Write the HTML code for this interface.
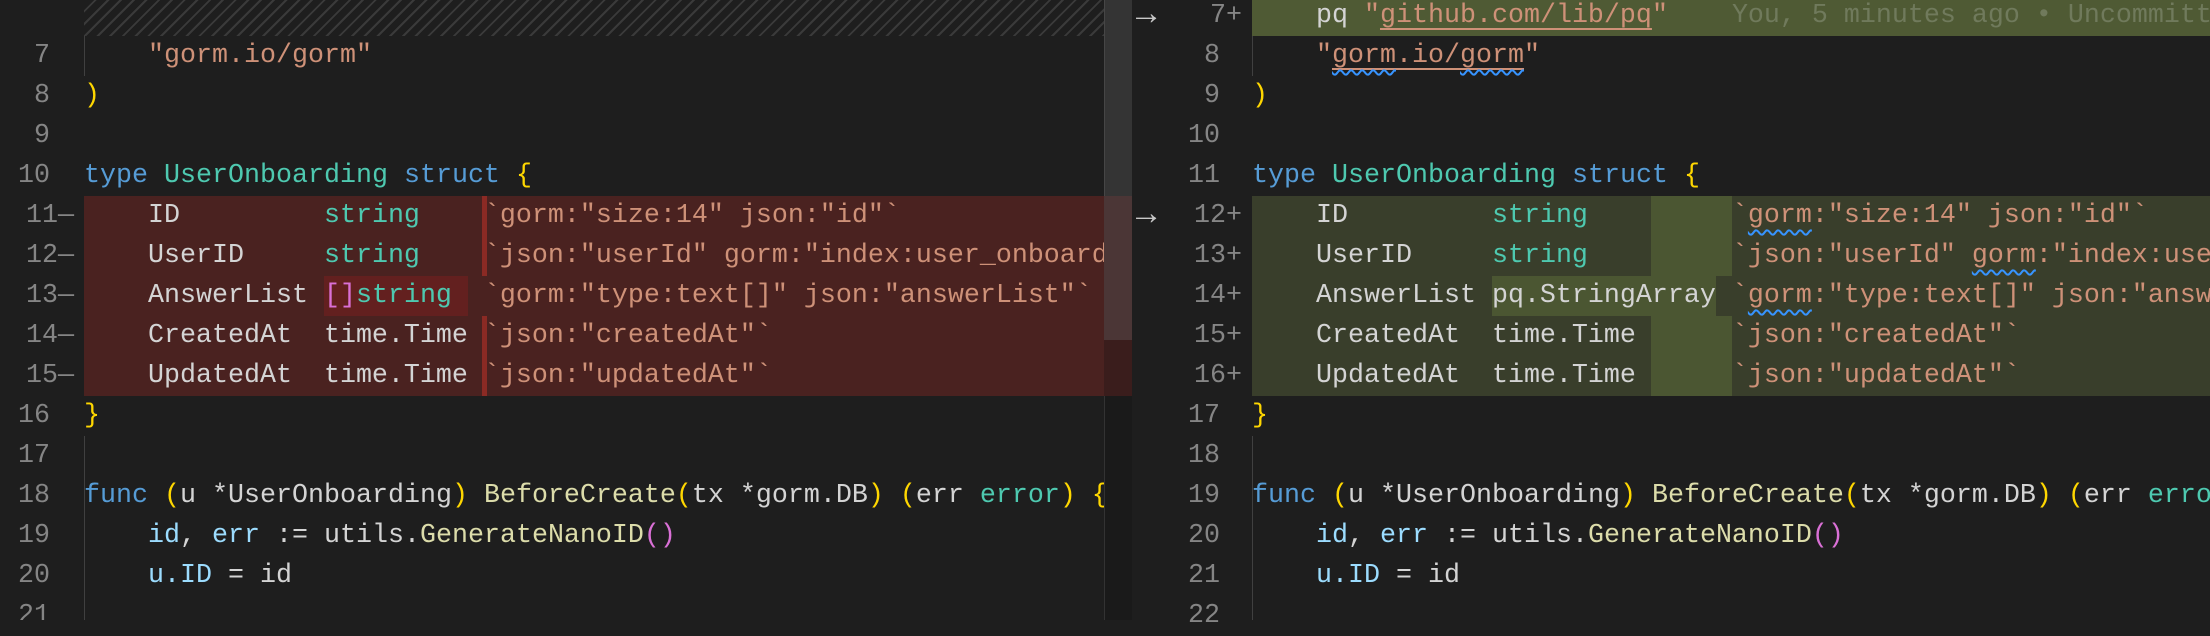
<!DOCTYPE html>
<html><head><meta charset="utf-8"><style>
*{margin:0;padding:0;box-sizing:border-box}
body{width:2210px;height:620px;background:#1e1e1e;overflow:hidden;position:relative;font-family:"Liberation Mono",monospace;font-size:26.667px;color:#d4d4d4}
.a{position:absolute}
.l{position:absolute;height:40px;line-height:40px;white-space:pre}
.n{color:#858585;text-align:right}
.k{color:#569cd6}.t{color:#4ec9b0}.s{color:#ce9178}.f{color:#dcdcaa}.b{color:#ffd700}.p{color:#da70d6}.v{color:#9cdcfe}
.lk{text-decoration:underline;text-decoration-color:#ce9178;text-underline-offset:6px;text-decoration-thickness:2px}
.sq{text-decoration:underline wavy #3794ff;text-underline-offset:7px;text-decoration-thickness:2px}
</style></head><body>
<!-- left pane -->
<div class="a" style="left:84px;top:0;width:1046px;height:36px;background:repeating-linear-gradient(-45deg,#3a3a3a 0 2px,#1e1e1e 2px 9px)"></div>
<div class="a" style="left:84px;top:196px;width:1046px;height:200px;background:#4a2220"></div>
<div class="a" style="left:324px;top:276px;width:144px;height:40px;background:#63201f"></div>
<div class="a" style="left:482px;top:196px;width:5px;height:80px;background:#8b2a24"></div>
<div class="a" style="left:482px;top:316px;width:5px;height:80px;background:#8b2a24"></div>
<div class="a" style="left:84px;top:36px;width:1px;height:40px;background:#404040"></div>
<div class="a" style="left:84px;top:436px;width:1px;height:184px;background:#404040"></div>
<div class="a" style="left:0;top:0;width:1104px;height:620px;overflow:hidden">
<div class="l n" style="left:0;width:50px;top:36px">7</div>
<div class="l n" style="left:0;width:50px;top:76px">8</div>
<div class="l n" style="left:0;width:50px;top:116px">9</div>
<div class="l n" style="left:0;width:50px;top:156px">10</div>
<div class="l n" style="left:0;width:74px;top:196px">11—</div>
<div class="l n" style="left:0;width:74px;top:236px">12—</div>
<div class="l n" style="left:0;width:74px;top:276px">13—</div>
<div class="l n" style="left:0;width:74px;top:316px">14—</div>
<div class="l n" style="left:0;width:74px;top:356px">15—</div>
<div class="l n" style="left:0;width:50px;top:396px">16</div>
<div class="l n" style="left:0;width:50px;top:436px">17</div>
<div class="l n" style="left:0;width:50px;top:476px">18</div>
<div class="l n" style="left:0;width:50px;top:516px">19</div>
<div class="l n" style="left:0;width:50px;top:556px">20</div>
<div class="l n" style="left:0;width:50px;top:596px">21</div>
<div class="l" style="left:84px;top:36px">    <span class="s">"gorm.io/gorm"</span></div>
<div class="l" style="left:84px;top:76px"><span class="b">)</span></div>
<div class="l" style="left:84px;top:156px"><span class="k">type</span> <span class="t">UserOnboarding</span> <span class="k">struct</span> <span class="b">{</span></div>
<div class="l" style="left:84px;top:196px">    ID         <span class="t">string</span>    <span class="s">`gorm:"size:14" json:"id"`</span></div>
<div class="l" style="left:84px;top:236px">    UserID     <span class="t">string</span>    <span class="s">`json:"userId" gorm:"index:user_onboarding_user_id"`</span></div>
<div class="l" style="left:84px;top:276px">    AnswerList <span class="p">[]</span><span class="t">string</span>  <span class="s">`gorm:"type:text[]" json:"answerList"`</span></div>
<div class="l" style="left:84px;top:316px">    CreatedAt  time.Time <span class="s">`json:"createdAt"`</span></div>
<div class="l" style="left:84px;top:356px">    UpdatedAt  time.Time <span class="s">`json:"updatedAt"`</span></div>
<div class="l" style="left:84px;top:396px"><span class="b">}</span></div>
<div class="l" style="left:84px;top:476px"><span class="k">func</span> <span class="b">(</span>u *UserOnboarding<span class="b">)</span> <span class="f">BeforeCreate</span><span class="b">(</span>tx *gorm.DB<span class="b">)</span> <span class="b">(</span>err <span class="t">error</span><span class="b">)</span> <span class="b">{</span></div>
<div class="l" style="left:84px;top:516px">    <span class="v">id</span>, <span class="v">err</span> := utils.<span class="f">GenerateNanoID</span><span class="p">()</span></div>
<div class="l" style="left:84px;top:556px">    <span class="v">u.ID</span> = id</div>
</div>
<div class="a" style="left:1104px;top:0;width:28px;height:620px;background:#1a1a1a;border-left:1px solid #333"></div>
<div class="a" style="left:1104px;top:196px;width:28px;height:200px;background:#3a1d1c"></div>
<div class="a" style="left:1104px;top:0;width:28px;height:340px;background:rgba(121,121,121,0.28)"></div>
<!-- right pane -->
<div class="a" style="left:1252px;top:-4px;width:958px;height:40px;background:#4f5a34"></div>
<div class="a" style="left:1252px;top:196px;width:958px;height:200px;background:#393e2b"></div>
<div class="a" style="left:1651px;top:196px;width:81px;height:80px;background:#4b5632"></div>
<div class="a" style="left:1651px;top:316px;width:81px;height:80px;background:#4b5632"></div>
<div class="a" style="left:1492px;top:276px;width:224px;height:40px;background:#4b5632"></div>
<div class="a" style="left:1252px;top:36px;width:1px;height:40px;background:#404040"></div>
<div class="a" style="left:1252px;top:436px;width:1px;height:184px;background:#404040"></div>
<div class="l" style="left:1136px;top:-4px;color:#c8c8c8;font-size:34px">→</div>
<div class="l" style="left:1136px;top:196px;color:#c8c8c8;font-size:34px">→</div>
<div class="l n" style="left:1132px;width:110px;top:-4px">7+</div>
<div class="l n" style="left:1132px;width:88px;top:36px">8</div>
<div class="l n" style="left:1132px;width:88px;top:76px">9</div>
<div class="l n" style="left:1132px;width:88px;top:116px">10</div>
<div class="l n" style="left:1132px;width:88px;top:156px">11</div>
<div class="l n" style="left:1132px;width:110px;top:196px">12+</div>
<div class="l n" style="left:1132px;width:110px;top:236px">13+</div>
<div class="l n" style="left:1132px;width:110px;top:276px">14+</div>
<div class="l n" style="left:1132px;width:110px;top:316px">15+</div>
<div class="l n" style="left:1132px;width:110px;top:356px">16+</div>
<div class="l n" style="left:1132px;width:88px;top:396px">17</div>
<div class="l n" style="left:1132px;width:88px;top:436px">18</div>
<div class="l n" style="left:1132px;width:88px;top:476px">19</div>
<div class="l n" style="left:1132px;width:88px;top:516px">20</div>
<div class="l n" style="left:1132px;width:88px;top:556px">21</div>
<div class="l n" style="left:1132px;width:88px;top:596px">22</div>
<div class="a" style="left:1252px;top:-4px;width:958px;height:624px;overflow:hidden">
<div class="l" style="left:0;top:0">    pq <span class="s">"<span class="lk">github.com/lib/pq</span>"</span>    <span style="color:#707a5c">You, 5 minutes ago • Uncommitted changes</span></div>
<div class="l" style="left:0;top:40px">    <span class="s">"<span class="lk"><span class="sq">gorm</span>.io/<span class="sq">gorm</span></span>"</span></div>
<div class="l" style="left:0;top:80px"><span class="b">)</span></div>
<div class="l" style="left:0;top:160px"><span class="k">type</span> <span class="t">UserOnboarding</span> <span class="k">struct</span> <span class="b">{</span></div>
<div class="l" style="left:0;top:200px">    ID         <span class="t">string</span>         <span class="s">`<span class="sq">gorm</span>:"size:14" json:"id"`</span></div>
<div class="l" style="left:0;top:240px">    UserID     <span class="t">string</span>         <span class="s">`json:"userId" <span class="sq">gorm</span>:"index:user_onboarding"`</span></div>
<div class="l" style="left:0;top:280px">    AnswerList pq.StringArray <span class="s">`<span class="sq">gorm</span>:"type:text[]" json:"answerList"`</span></div>
<div class="l" style="left:0;top:320px">    CreatedAt  time.Time      <span class="s">`json:"createdAt"`</span></div>
<div class="l" style="left:0;top:360px">    UpdatedAt  time.Time      <span class="s">`json:"updatedAt"`</span></div>
<div class="l" style="left:0;top:400px"><span class="b">}</span></div>
<div class="l" style="left:0;top:480px"><span class="k">func</span> <span class="b">(</span>u *UserOnboarding<span class="b">)</span> <span class="f">BeforeCreate</span><span class="b">(</span>tx *gorm.DB<span class="b">)</span> <span class="b">(</span>err <span class="t">error</span><span class="b">)</span> <span class="b">{</span></div>
<div class="l" style="left:0;top:520px">    <span class="v">id</span>, <span class="v">err</span> := utils.<span class="f">GenerateNanoID</span><span class="p">()</span></div>
<div class="l" style="left:0;top:560px">    <span class="v">u.ID</span> = id</div>
</div>
</body></html>
